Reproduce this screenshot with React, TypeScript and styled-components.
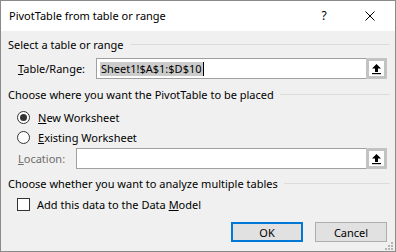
import React from 'react';
import styled, { createGlobalStyle } from 'styled-components';

const GlobalStyle = createGlobalStyle`
  html, body {
    margin: 0;
    padding: 0;
    background: #ffffff;
  }
  body {
    font-family: "Noto Sans", "Segoe UI", sans-serif;
    font-size: 11px;
    color: #000000;
  }
`;

const UploadIcon = () => (
  <svg width="11" height="12" viewBox="0 0 11 12">
    <path d="M5.5 1 L10 5.5 L7 5.5 L7 9 L4 9 L4 5.5 L1 5.5 Z" fill="#000" />
    <rect x="1" y="10" width="9" height="1.2" fill="#000" />
  </svg>
);

const RangeInput = ({ value, selected }: { value?: string; selected?: boolean }) => (
  <InputGroup>
    <Field>
      {value && <Selection $selected={selected}>{value}</Selection>}
      {selected && <Caret />}
    </Field>
    <PickButton>
      <UploadIcon />
    </PickButton>
  </InputGroup>
);

const App = () => {
  return (
    <>
      <GlobalStyle />
      <Window>
        <TitleBar>
          <Title>PivotTable from table or range</Title>
          <TitleButtons>
            <HelpGlyph>?</HelpGlyph>
            <CloseGlyph>
              <svg width="10" height="10" viewBox="0 0 10 10">
                <path d="M0.5 0.5 L9.5 9.5 M9.5 0.5 L0.5 9.5" stroke="#000" strokeWidth="1" />
              </svg>
            </CloseGlyph>
          </TitleButtons>
        </TitleBar>
        <Body>
          <GroupHeader>
            <span>Select a table or range</span>
            <Rule />
          </GroupHeader>
          <FieldRow $top={6}>
            <Label $width={78}>
              <u>T</u>able/Range:
            </Label>
            <RangeInput value="Sheet1!$A$1:$D$10" selected />
          </FieldRow>

          <GroupHeader $top={7}>
            <span>Choose where you want the PivotTable to be placed</span>
            <Rule />
          </GroupHeader>
          <OptionRow $top={5}>
            <Radio $checked />
            <span>
              <u>N</u>ew Worksheet
            </span>
          </OptionRow>
          <OptionRow>
            <Radio />
            <span>
              <u>E</u>xisting Worksheet
            </span>
          </OptionRow>
          <FieldRow $top={1}>
            <Label $width={58} $disabled>
              <u>L</u>ocation:
            </Label>
            <RangeInput />
          </FieldRow>

          <GroupHeader $top={6}>
            <span>Choose whether you want to analyze multiple tables</span>
            <Rule />
          </GroupHeader>
          <OptionRow $top={3}>
            <Checkbox />
            <span>
              Add this data to the Data <u>M</u>odel
            </span>
          </OptionRow>

          <Footer>
            <Button $primary>OK</Button>
            <Button>Cancel</Button>
          </Footer>
        </Body>
        <Grip>
          <svg width="8" height="8" viewBox="0 0 8 8">
            <rect x="6" y="0" width="2" height="2" fill="#b4b4b4" />
            <rect x="3" y="3" width="2" height="2" fill="#b4b4b4" />
            <rect x="6" y="3" width="2" height="2" fill="#b4b4b4" />
            <rect x="0" y="6" width="2" height="2" fill="#b4b4b4" />
            <rect x="3" y="6" width="2" height="2" fill="#b4b4b4" />
            <rect x="6" y="6" width="2" height="2" fill="#b4b4b4" />
          </svg>
        </Grip>
      </Window>
    </>
  );
};

export default App;

const Window = styled.div`
  position: relative;
  width: 396px;
  height: 252px;
  box-sizing: border-box;
  border: 1px solid #8a8a8a;
  background: #f0f0f0;
  display: flex;
  flex-direction: column;
  overflow: hidden;
`;

const TitleBar = styled.div`
  height: 30px;
  flex: none;
  background: #ffffff;
  display: flex;
  align-items: center;
  padding-left: 8px;
  font-size: 11px;
`;

const Title = styled.div`
  flex: 1;
  margin-top: -1px;
`;

const TitleButtons = styled.div`
  display: flex;
  align-items: center;
  height: 100%;
`;

const HelpGlyph = styled.div`
  width: 46px;
  text-align: center;
  font-size: 12px;
  margin-top: -1px;
`;

const CloseGlyph = styled.div`
  width: 46px;
  height: 100%;
  display: flex;
  align-items: center;
  justify-content: center;
  margin-right: 2px;
`;

const Body = styled.div`
  flex: 1;
  padding: 5px 8px 0 7px;
  display: flex;
  flex-direction: column;
`;

const GroupHeader = styled.div<{ $top?: number }>`
  height: 16px;
  margin-top: ${(p) => p.$top ?? 0}px;
  display: flex;
  align-items: center;
  gap: 6px;
  white-space: nowrap;
`;

const Rule = styled.div`
  flex: 1;
  height: 1px;
  background: #dcdcdc;
  margin-right: -3px;
`;

const FieldRow = styled.div<{ $top?: number }>`
  height: 21px;
  margin-top: ${(p) => p.$top ?? 0}px;
  padding-left: 10px;
  display: flex;
  align-items: center;
`;

const Label = styled.div<{ $width: number; $disabled?: boolean }>`
  width: ${(p) => p.$width}px;
  flex: none;
  color: ${(p) => (p.$disabled ? '#6d6d6d' : '#000')};
`;

const InputGroup = styled.div`
  flex: 1;
  height: 21px;
  box-sizing: border-box;
  border: 1px solid #a0a0a0;
  background: #ffffff;
  display: flex;
`;

const Field = styled.div`
  flex: 1;
  display: flex;
  align-items: center;
  padding-left: 3px;
`;

const Selection = styled.span<{ $selected?: boolean }>`
  background: ${(p) => (p.$selected ? '#cccccc' : 'transparent')};
  line-height: 14px;
  padding: 0 1px;
`;

const Caret = styled.span`
  width: 1px;
  height: 14px;
  background: #000;
`;

const PickButton = styled.div`
  width: 21px;
  flex: none;
  box-sizing: border-box;
  margin: -1px -1px -1px 0;
  border: 3px solid #c3c3c3;
  background: #ffffff;
  display: flex;
  align-items: center;
  justify-content: center;
`;

const OptionRow = styled.div<{ $top?: number }>`
  height: 20px;
  margin-top: ${(p) => p.$top ?? 0}px;
  padding-left: 9px;
  display: flex;
  align-items: center;
  gap: 8px;
`;

const Radio = styled.span<{ $checked?: boolean }>`
  width: 13px;
  height: 13px;
  box-sizing: border-box;
  border-radius: 50%;
  border: 1px solid #333333;
  background: #ffffff;
  display: flex;
  align-items: center;
  justify-content: center;
  &::after {
    content: '';
    width: 7px;
    height: 7px;
    border-radius: 50%;
    background: ${(p) => (p.$checked ? '#333333' : 'transparent')};
  }
`;

const Checkbox = styled.span`
  width: 13px;
  height: 13px;
  box-sizing: border-box;
  border: 1px solid #333333;
  background: #ffffff;
  margin-right: -1px;
`;

const Footer = styled.div`
  margin-top: 8px;
  display: flex;
  justify-content: flex-end;
  gap: 12px;
`;

const Button = styled.div<{ $primary?: boolean }>`
  width: 72px;
  height: 20px;
  box-sizing: border-box;
  border: ${(p) => (p.$primary ? '2px solid #0078d7' : '1px solid #adadad')};
  background: #e1e1e1;
  display: flex;
  align-items: center;
  justify-content: center;
`;

const Grip = styled.div`
  position: absolute;
  right: 2px;
  bottom: 1px;
  line-height: 0;
`;
